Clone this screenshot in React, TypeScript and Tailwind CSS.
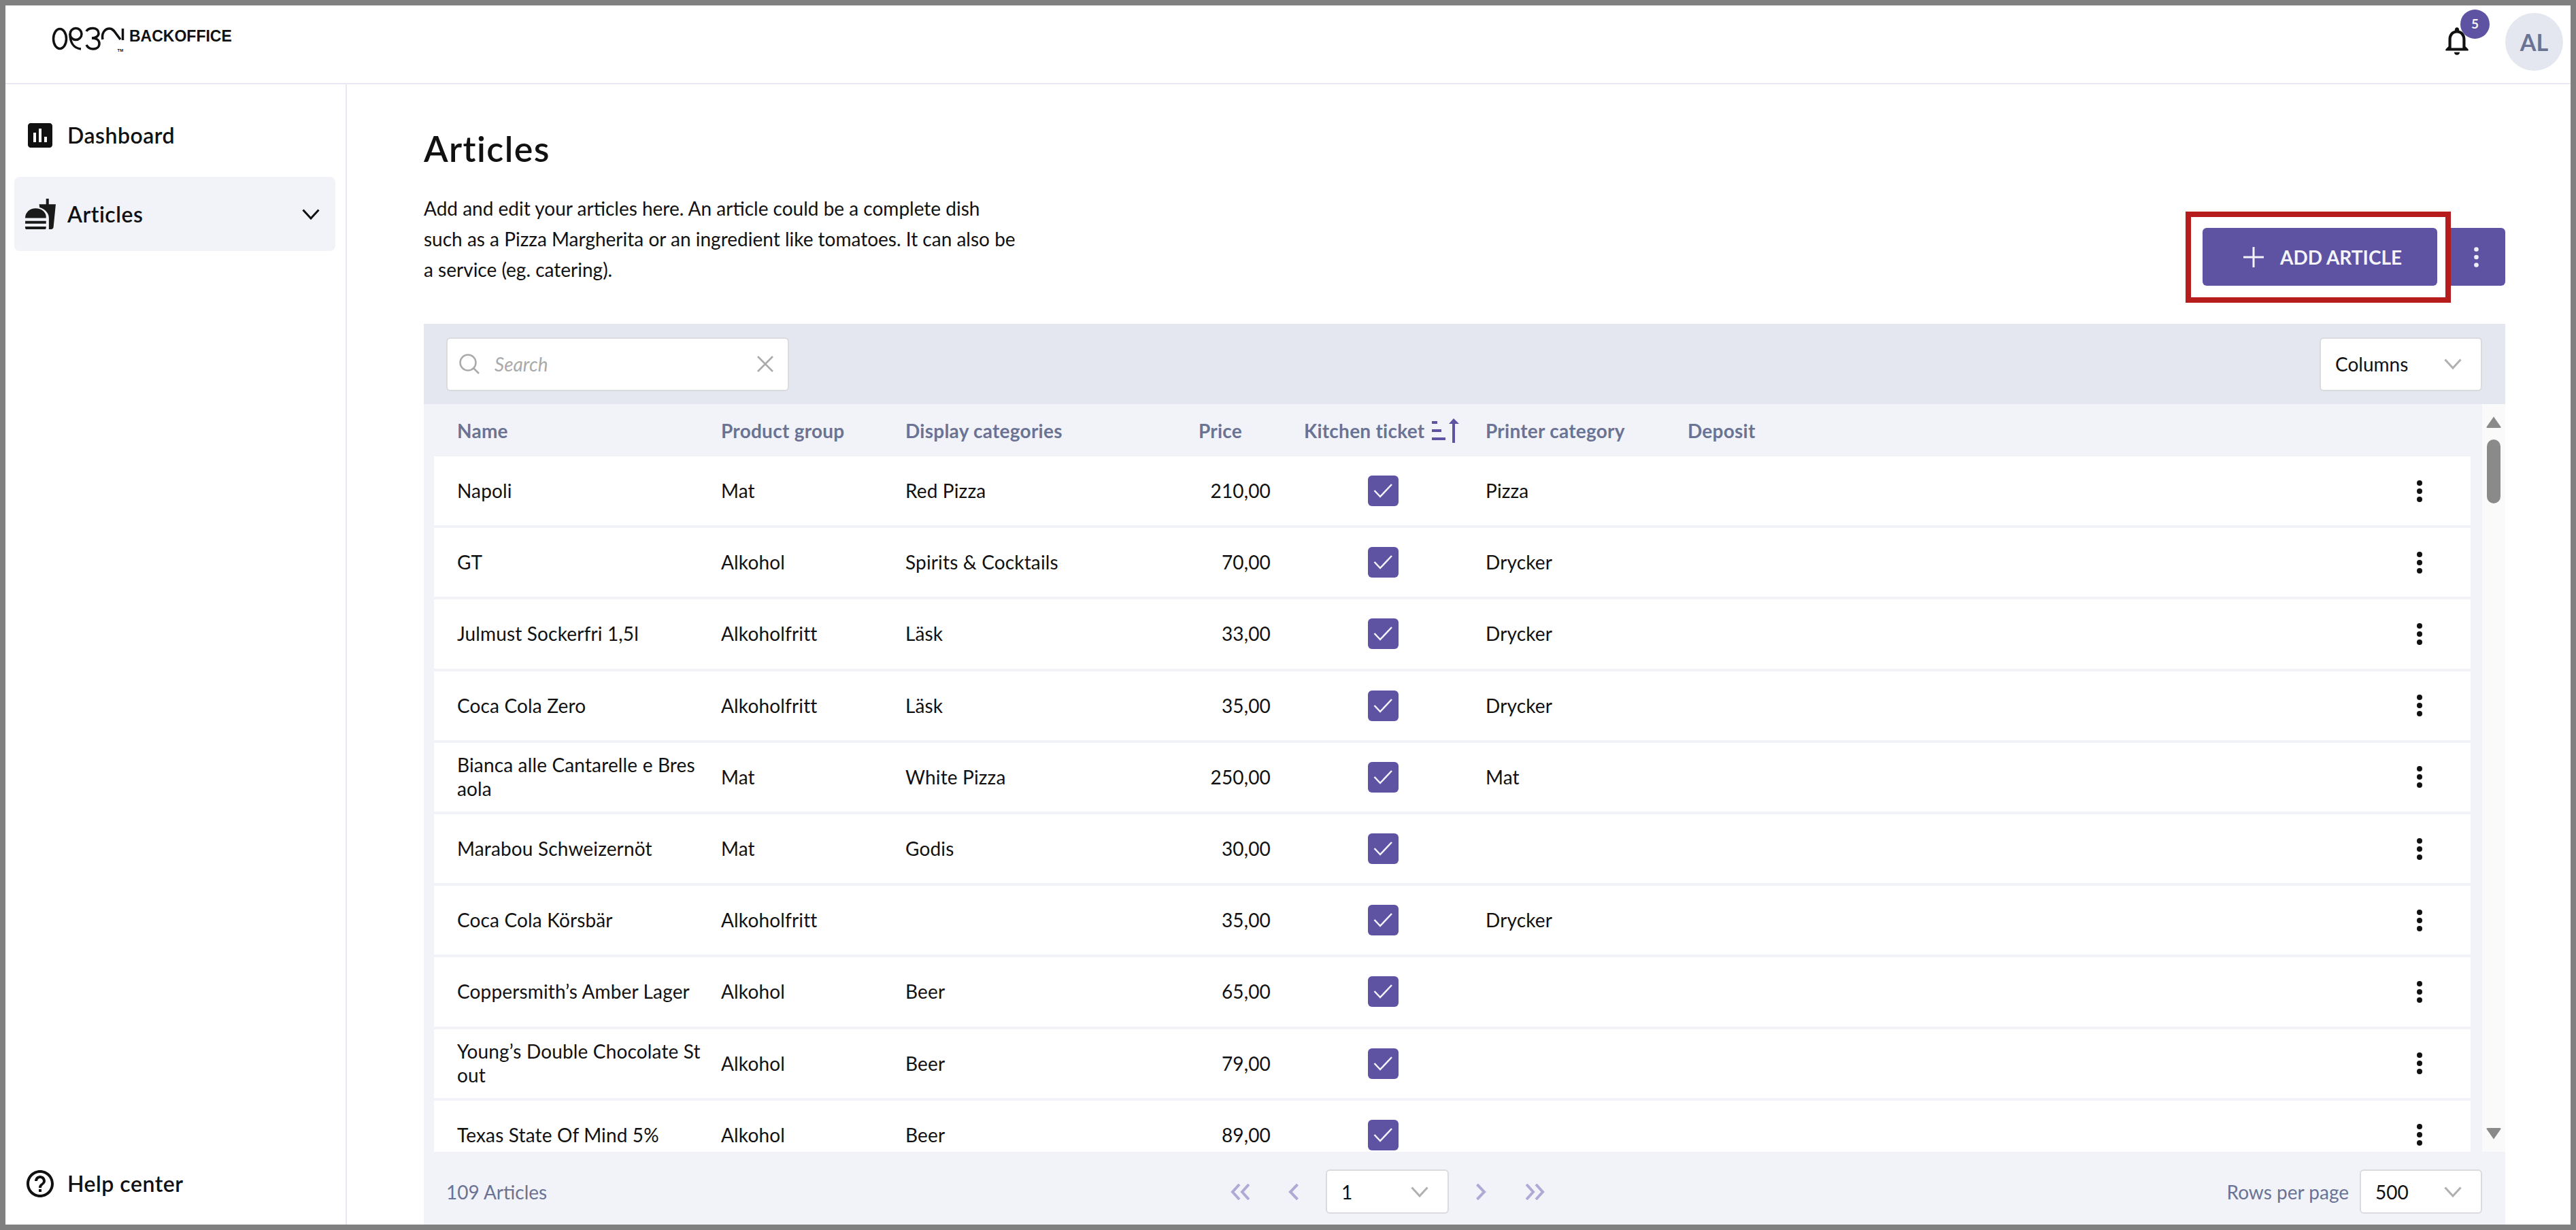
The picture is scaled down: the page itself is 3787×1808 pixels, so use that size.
import React from "react";

const rows: [string, string, string, string, string][] = [
  ["Napoli", "Mat", "Red Pizza", "210,00", "Pizza"],
  ["GT", "Alkohol", "Spirits & Cocktails", "70,00", "Drycker"],
  ["Julmust Sockerfri 1,5l", "Alkoholfritt", "Läsk", "33,00", "Drycker"],
  ["Coca Cola Zero", "Alkoholfritt", "Läsk", "35,00", "Drycker"],
  ["Bianca alle Cantarelle e Bresaola", "Mat", "White Pizza", "250,00", "Mat"],
  ["Marabou Schweizernöt", "Mat", "Godis", "30,00", ""],
  ["Coca Cola Körsbär", "Alkoholfritt", "", "35,00", "Drycker"],
  ["Coppersmith’s Amber Lager", "Alkohol", "Beer", "65,00", ""],
  ["Young’s Double Chocolate Stout", "Alkohol", "Beer", "79,00", ""],
  ["Texas State Of Mind 5%", "Alkohol", "Beer", "89,00", ""],
];

function Chevron({ className }: { className: string }) {
  return (
    <svg width="26" height="16" viewBox="0 0 26 16" fill="none" className={className}>
      <polyline points="1.5,1.5 13,14 24.5,1.5" stroke="currentColor" strokeWidth="3" />
    </svg>
  );
}

function Select({ label, cls }: { label: string; cls: string }) {
  return (
    <div className={`flex items-center justify-between rounded-md border-2 border-[#dadbdf] bg-white pl-[21px] pr-[28px] text-[28px] text-[#111] ${cls}`}>
      <span>{label}</span>
      <Chevron className="text-[#b0b0b0]" />
    </div>
  );
}

function Dots({ className }: { className: string }) {
  return (
    <svg width="8" height="32" viewBox="0 0 8 32" className={className}>
      <circle cx="4" cy="4" r="4" fill="currentColor" />
      <circle cx="4" cy="16" r="4" fill="currentColor" />
      <circle cx="4" cy="28" r="4" fill="currentColor" />
    </svg>
  );
}

function Logo() {
  return (
    <svg width="116" height="45" viewBox="70 36 116 45" fill="none" stroke="#111" strokeWidth="3.500">
      <ellipse cx="88" cy="57" rx="9.500" ry="14.500" />
      <circle cx="111.500" cy="50" r="8.500" />
      <path d="M103 50C103 62 108 71 119 72" />
      <path d="M127 46C129 42 133 41.500 137 41.500C142 41.500 145 45 145 49C145 53 141 56 135 56C142 56 146 59 146 64C146 69 142 72 137 72C133 72 129 70 127 66" />
      <path d="M151 58C149 49 154 42 161 42C166 42 168 46 171 50L177 58" />
      <path d="M180.500 42V59" />
      <text x="172.500" y="75.500" fontSize="6" fontWeight="700" fill="#111" stroke="none" fontFamily="Liberation Sans, sans-serif">TM</text>
    </svg>
  );
}

function Row({ r }: { r: [string, string, string, string, string] }) {
  return (
    <div className="grid h-[101.2px] shrink-0 grid-cols-[422px_271px_369px_168px_316px_297px_1fr] items-center bg-white text-[28px] leading-[35px] tracking-[0.15px] text-[#111]">
      <div className="pl-[34px] pr-[28px] [word-break:break-all]">{r[0]}</div>
      <div>{r[1]}</div>
      <div>{r[2]}</div>
      <div className="text-right">{r[3]}</div>
      <div className="pl-[143px]">
        <div className="flex h-[45px] w-[45px] items-center justify-center rounded-md bg-[#5e53a3]">
          <svg width="45" height="45" viewBox="0 0 45 45" fill="none">
            <polyline points="9.500,22 18,31 35,13" stroke="#f4f3fa" strokeWidth="2.500" />
          </svg>
        </div>
      </div>
      <div>{r[4]}</div>
      <div className="flex justify-end pr-[71px]">
        <Dots className="text-[#111]" />
      </div>
    </div>
  );
}

export default function App() {
  return (
    <div className="flex h-screen w-screen flex-col overflow-hidden border-8 border-[#808080] bg-white font-[Lato,sans-serif] text-[#111]">
      <header className="flex h-[116px] shrink-0 items-start justify-between border-b-2 border-[#e8e9f3]">
        <div className="flex items-start pl-[62px] pt-[28px]">
          <Logo />
          <span className="ml-1 mt-[4px] font-['Liberation_Sans',sans-serif] text-[23px] font-bold leading-[27px] text-[#111]">BACKOFFICE</span>
        </div>
        <div className="flex items-start pr-[11px] pt-[11px]">
          <div className="relative mr-[46px] mt-[16px]">
            <svg width="50" height="50" viewBox="0 0 24 24" fill="#111">
              <path d="M12 22c1.100 0 2-.9 2-2h-4c0 1.100.9 2 2 2zm6-6v-5c0-3.070-1.630-5.640-4.500-6.320V4c0-.83-.67-1.500-1.500-1.500s-1.500.67-1.500 1.500v.68C7.640 5.360 6 7.920 6 11v5l-2 2v1h16v-1l-2-2zm-2 1H8v-6c0-2.480 1.510-4.500 4-4.500s4 2.020 4 4.500v6z" />
            </svg>
            <span className="absolute left-[30px] top-[-21px] flex h-[43px] w-[43px] items-center justify-center rounded-full bg-[#5e53a3] text-[19px] font-bold text-[#f4f3fa]">5</span>
          </div>
          <div className="flex h-[85px] w-[85px] items-center justify-center rounded-full bg-[#e4e7f0] text-[34px] font-bold text-[#6b7394]">AL</div>
        </div>
      </header>

      <div className="flex min-h-0 flex-1">
        <aside className="flex w-[502px] shrink-0 flex-col justify-between border-r-2 border-[#e8e9f3] pb-[28px] pl-[13px] pr-[15px] pt-[20px] text-[32px] font-semibold tracking-[0.5px] text-[#111]">
          <nav className="flex flex-col gap-[7px]">
            <div className="flex h-[109px] items-center gap-4 rounded-lg pl-[14px]">
              <svg width="48" height="48" viewBox="0 0 24 24" fill="#111">
                <path d="M19 3H5c-1.100 0-2 .9-2 2v14c0 1.100.9 2 2 2h14c1.100 0 2-.9 2-2V5c0-1.100-.9-2-2-2zM9 17H7v-7h2v7zm4 0h-2V7h2v10zm4 0h-2v-4h2v4z" />
              </svg>
              <span>Dashboard</span>
            </div>
            <div className="flex h-[109px] items-center rounded-lg bg-[#f2f3f8] pl-[14px] pr-[23px]">
              <svg width="49" height="49" viewBox="0 0 24 24" fill="#1a1a1a">
                <path d="M18.060 22.990h1.660c.84 0 1.530-.64 1.630-1.460L23 5.050h-5V1h-1.970v4.050h-4.970l.3 2.340c1.710.47 3.310 1.320 4.270 2.260 1.440 1.420 2.430 2.890 2.430 5.290v8.050zM1 21.990V21h15.030v.99c0 .55-.45 1-1.010 1H2.010c-.56 0-1.010-.45-1.010-1zm15.030-7c.5-4-3.230-6.990-7.510-6.990C4.240 7.990 1 11 1 14.990h15.030zM1.020 17h15v2h-15z" />
              </svg>
              <span className="ml-[15px] flex-1">Articles</span>
              <Chevron className="text-[#111]" />
            </div>
          </nav>
          <div className="flex h-[65px] items-center gap-4 pl-[14px]">
            <svg width="48" height="48" viewBox="0 0 24 24" fill="#111">
              <path d="M11 18h2v-2h-2v2zm1-16C6.480 2 2 6.480 2 12s4.480 10 10 10 10-4.480 10-10S17.520 2 12 2zm0 18c-4.410 0-8-3.590-8-8s3.590-8 8-8 8 3.590 8 8-3.590 8-8 8zm0-14c-2.210 0-4 1.790-4 4h2c0-1.100.9-2 2-2s2 .9 2 2c0 2-3 1.750-3 5h2c0-2.250 3-2.500 3-5 0-2.210-1.790-4-4-4z" />
            </svg>
            <span>Help center</span>
          </div>
        </aside>

        <main className="flex min-w-0 flex-1 flex-col pl-[113px] pr-[96px]">
          <div className="flex h-[352px] shrink-0 justify-between">
            <div className="pt-[62px]">
              <h1 className="text-[52px] font-semibold leading-[64px] tracking-[1.4px] text-[#111]">Articles</h1>
              <p className="mt-[34px] w-[871px] text-[28px] leading-[45px] text-[#111]">
                Add and edit your articles here. An article could be a complete dish such as a Pizza Margherita or an ingredient like tomatoes. It can also be a service (eg. catering).
              </p>
            </div>
            <div className="mb-[31px] flex items-start self-end">
              <div className="border-8 border-[#b71c1c] pb-[17px] pl-[17px] pr-3 pt-4">
                <button className="flex h-[85px] w-[345px] items-center gap-6 rounded-md bg-[#5e53a3] pl-[60px] text-[28px] font-bold text-[#f4f3fa]">
                  <svg width="30" height="30" viewBox="0 0 30 30" stroke="#f4f3fa" strokeWidth="3">
                    <path d="M15 0V30M0 15H30" />
                  </svg>
                  ADD ARTICLE
                </button>
              </div>
              <div className="mt-6 flex h-[85px] w-[80px] items-center justify-center rounded-r-md bg-[#5e53a3] pr-[6px]">
                <svg width="7" height="30" viewBox="0 0 7 30" fill="#f0eff8">
                  <circle cx="3.500" cy="3.500" r="3.300" />
                  <circle cx="3.500" cy="15" r="3.300" />
                  <circle cx="3.500" cy="26.500" r="3.300" />
                </svg>
              </div>
            </div>
          </div>

          <div className="flex min-h-0 flex-1 flex-col">
            <div className="flex h-[118px] shrink-0 items-center justify-between bg-[#e4e7f0] pl-[33px] pr-[34px]">
              <div className="flex h-[79px] w-[504px] items-center rounded-md border-2 border-[#dadbdf] bg-white pl-[17px] pr-[21px]">
                <svg width="30" height="30" viewBox="0 0 30 30" fill="none" stroke="#aaa" strokeWidth="2.500">
                  <ellipse cx="13" cy="13" rx="11.500" ry="11.500" />
                  <path d="M21 21L29 29" />
                </svg>
                <span className="ml-[22px] flex-1 text-[28px] italic text-[#aaa]">Search</span>
                <svg width="24" height="24" viewBox="0 0 24 24" stroke="#aaa" strokeWidth="2.500">
                  <path d="M1 1L23 23M23 1L1 23" />
                </svg>
              </div>
              <Select label="Columns" cls="h-[79px] w-[239px]" />
            </div>

            <div className="flex min-h-0 flex-1">
              <div className="flex min-w-0 flex-1 flex-col overflow-hidden bg-[#f2f3f8] pl-[15px] pr-[17px]">
                <div className="grid h-[77px] shrink-0 grid-cols-[422px_271px_369px_168px_316px_297px_1fr] items-center text-[28px] font-bold tracking-[0.25px] text-[#6b7394]">
                  <div className="pl-[34px]">Name</div>
                  <div>Product group</div>
                  <div>Display categories</div>
                  <div className="pr-[42px] text-right">Price</div>
                  <div className="flex items-center whitespace-nowrap pl-[49px]">
                    <span>Kitchen ticket</span>
                    <svg width="40" height="36" viewBox="0 0 40 36" className="ml-[11px] shrink-0" fill="#5e53a3">
                      <rect x="0" y="4" width="8" height="4" />
                      <rect x="0" y="16" width="14" height="4" />
                      <rect x="0" y="28" width="20" height="4" />
                      <rect x="30" y="8" width="4" height="28" />
                      <polygon points="25,8 32,0 40,8" />
                    </svg>
                  </div>
                  <div>Printer category</div>
                  <div>Deposit</div>
                </div>
                <div className="flex min-h-0 flex-1 flex-col gap-1 overflow-hidden">
                  {rows.map((r) => (
                    <Row key={r[0]} r={r} />
                  ))}
                </div>
              </div>
              <div className="flex w-[34px] shrink-0 flex-col items-center bg-[#fafafa] pb-[18px] pt-[18px]">
                <svg width="22" height="17" viewBox="0 0 22 17" fill="#8a8a8a">
                  <path d="M11 0.500L21.500 15.500Q22 17 20 17H2Q0 17 .5 15.500Z" />
                </svg>
                <div className="mt-[17px] h-[94px] w-[20px] rounded-full bg-[#8a8a8a]" />
                <svg width="22" height="17" viewBox="0 0 22 17" fill="#8a8a8a" className="mt-auto">
                  <path d="M11 16.500L21.500 1.500Q22 0 20 0H2Q0 0 .5 1.500Z" />
                </svg>
              </div>
            </div>

            <div className="grid h-[107px] shrink-0 grid-cols-[1153px_auto_1fr] items-center bg-[#f2f3f8] pl-[33px] pr-[34px] pt-[10px] text-[28px] text-[#6b7394]">
              <div>109 Articles</div>
              <div className="flex items-center text-[#aeaad6]">
                <svg width="28" height="24" viewBox="0 0 28 24" fill="none" stroke="currentColor" strokeWidth="4">
                  <polyline points="13,1 3,12 13,23" />
                  <polyline points="27,1 17,12 27,23" />
                </svg>
                <svg width="15" height="24" viewBox="0 0 15 24" fill="none" stroke="currentColor" strokeWidth="4" className="ml-[57px] mr-10">
                  <polyline points="13.500,1 3,12 13.500,23" />
                </svg>
                <Select label="1" cls="h-[65px] w-[181px]" />
                <svg width="15" height="24" viewBox="0 0 15 24" fill="none" stroke="currentColor" strokeWidth="4" className="ml-10 mr-[58px]">
                  <polyline points="1.500,1 12,12 1.500,23" />
                </svg>
                <svg width="28" height="24" viewBox="0 0 28 24" fill="none" stroke="currentColor" strokeWidth="4">
                  <polyline points="1,1 11,12 1,23" />
                  <polyline points="15,1 25,12 15,23" />
                </svg>
              </div>
              <div className="flex items-center justify-end gap-4">
                <span>Rows per page</span>
                <Select label="500" cls="h-[65px] w-[180px]" />
              </div>
            </div>
          </div>
        </main>
      </div>
    </div>
  );
}
